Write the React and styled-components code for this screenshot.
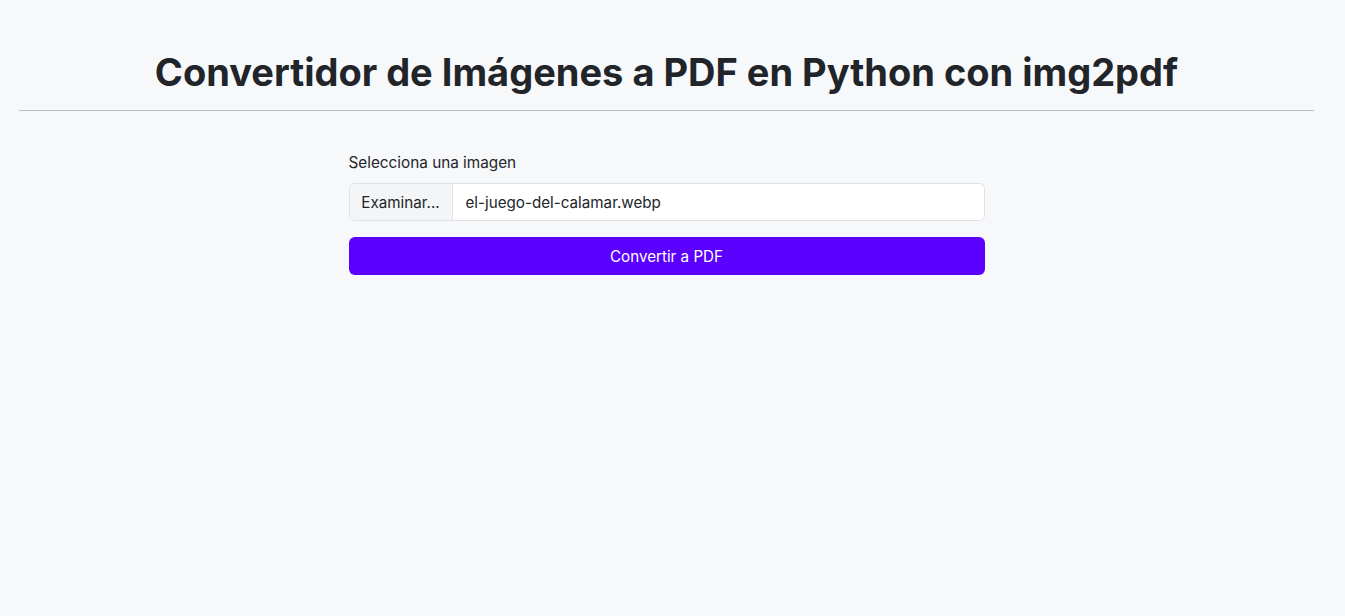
import styled, { createGlobalStyle } from 'styled-components';

const GlobalStyle = createGlobalStyle`
    html, body {
        margin: 0;
        background: #f7f8fa;
        color: #212529;
        font-family: Inter, "Noto Sans", "Liberation Sans", sans-serif;
    }
    * { box-sizing: border-box; }
`;

function App() {
    return (
        <Page>
            <GlobalStyle />
            <Title>Convertidor de Imágenes a PDF en Python con img2pdf</Title>
            <Divider />
            <Form onSubmit={(e) => e.preventDefault()}>
                <Label htmlFor="archivo">Selecciona una imagen</Label>
                <FileField id="archivo">
                    <BrowseBt>Examinar...</BrowseBt>
                    <FileName>el-juego-del-calamar.webp</FileName>
                </FileField>
                <SubmitBt type="submit">Convertir a PDF</SubmitBt>
            </Form>
        </Page>
    );
}
export default App;

const Page = styled.div`
    min-height: 616px;
    padding: 48px 31px 0 19px;
    display: flex;
    flex-direction: column;
    align-items: center;
`;

const Title = styled.h1`
    margin: 0 0 14px;
    font-size: 38px;
    line-height: 48px;
    font-weight: 700;
    letter-spacing: 0;
    text-align: center;
    color: #212529;
`;

const Divider = styled.hr`
    width: 100%;
    margin: 0 0 40px;
    border: 0;
    border-top: 1px solid #bcbdbe;
`;

const Form = styled.form`
    width: 636px;
    display: flex;
    flex-direction: column;
`;

const Label = styled.label`
    font-size: 15.3px;
    line-height: 24px;
    margin-bottom: 8px;
`;

const FileField = styled.div`
    height: 38px;
    display: flex;
    background: #ffffff;
    border: 1px solid #dee2e6;
    border-radius: 6px;
    overflow: hidden;
    margin-bottom: 16px;
`;

const BrowseBt = styled.div`
    width: 103px;
    display: flex;
    align-items: center;
    justify-content: center;
    background: #f4f5f7;
    border-right: 1px solid #dee2e6;
    font-size: 15.2px;
`;

const FileName = styled.div`
    display: flex;
    align-items: center;
    padding-left: 13px;
    font-size: 15.2px;
`;

const SubmitBt = styled.button`
    height: 38px;
    border: 0;
    border-radius: 6px;
    background: #5b00ff;
    color: #ffffff;
    font-family: inherit;
    font-size: 15.2px;
    cursor: pointer;
`;
